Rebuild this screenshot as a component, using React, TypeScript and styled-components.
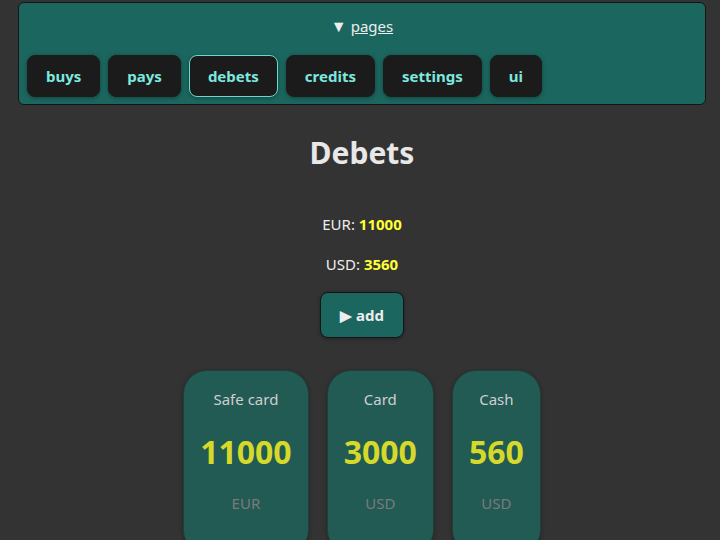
import React from "react";
import styled, { createGlobalStyle } from "styled-components";

const Global = createGlobalStyle`
  html, body { margin: 0; padding: 0; background: #333333; }
  body { font-family: "Noto Sans", "Open Sans", sans-serif; color: #e6e6e6; }
  * { box-sizing: border-box; }
`;

const Page = styled.div`
  padding: 2px 14px 0 18px;
  display: flex;
  flex-direction: column;
  align-items: center;
`;

const Nav = styled.details`
  width: 100%;
  background: #1b675f;
  border: 1px solid #151515;
  border-radius: 6px;
  padding: 12px 8px 7px;
`;

const Summary = styled.summary`
  list-style: none;
  text-align: center;
  font-size: 15px;
  color: #ededed;
  cursor: pointer;
  line-height: 22px;
  &::-webkit-details-marker { display: none; }
`;

const Arrow = styled.span`
  font-size: 16px;
  margin-right: 4px;
`;

const SummaryLabel = styled.span`
  text-decoration: underline;
`;

const Tabs = styled.div`
  display: flex;
  gap: 8px;
  margin-top: 18px;
`;

const Tab = styled.button<{ $active?: boolean }>`
  height: 42px;
  padding: 0 18px;
  background: #1b1b1b;
  border: 1px solid ${(p) => (p.$active ? "#6fd6cd" : "#1b1b1b")};
  border-radius: 8px;
  color: #7ce8df;
  font-family: inherit;
  font-size: 15px;
  font-weight: 700;
  box-shadow: 0 1px 4px rgba(0, 0, 0, 0.35);
`;

const Title = styled.h1`
  margin: 28px 0 0;
  font-size: 30px;
  line-height: 40px;
  font-weight: 700;
  color: #e8e8e8;
`;

const Line = styled.p<{ $first?: boolean }>`
  margin: ${(p) => (p.$first ? "40px" : "18px")} 0 0;
  font-size: 15px;
  line-height: 22px;
  color: #eeeeee;
`;

const Amount = styled.b`
  color: #ffff33;
`;

const AddButton = styled.button`
  margin-top: 17px;
  width: 84px;
  height: 46px;
  background: #1b675f;
  border: 1px solid #141414;
  border-radius: 8px;
  color: #ededed;
  font-family: inherit;
  font-size: 15px;
  font-weight: 700;
  box-shadow: 0 1px 4px rgba(0, 0, 0, 0.3);
`;

const Cards = styled.div`
  display: flex;
  gap: 18px;
  margin-top: 32px;
`;

const Card = styled.div`
  background: #225b54;
  border: 1px solid #1f3f3b;
  border-radius: 24px;
  padding: 18px 16px 40px;
  display: flex;
  flex-direction: column;
  align-items: center;
  box-shadow: 0 1px 4px rgba(0, 0, 0, 0.3);
`;

const CardTitle = styled.div`
  font-size: 15px;
  line-height: 20px;
  color: #cfcfcf;
`;

const CardValue = styled.div`
  margin-top: 31px;
  font-size: 32px;
  line-height: 24px;
  font-weight: 700;
  color: #d6d92a;
`;

const CardCurrency = styled.div`
  margin-top: 29px;
  font-size: 15px;
  line-height: 20px;
  color: #7a7a7a;
`;

const tabs = ["buys", "pays", "debets", "credits", "settings", "ui"];
const cards = [
  { title: "Safe card", value: "11000", cur: "EUR" },
  { title: "Card", value: "3000", cur: "USD" },
  { title: "Cash", value: "560", cur: "USD" },
];

export default function App() {
  return (
    <>
      <Global />
      <Page>
        <Nav open>
          <Summary>
            <Arrow>▼</Arrow>
            <SummaryLabel>pages</SummaryLabel>
          </Summary>
          <Tabs>
            {tabs.map((t) => (
              <Tab key={t} $active={t === "debets"}>
                {t}
              </Tab>
            ))}
          </Tabs>
        </Nav>
        <Title>Debets</Title>
        <Line $first>
          EUR: <Amount>11000</Amount>
        </Line>
        <Line>
          USD: <Amount>3560</Amount>
        </Line>
        <AddButton>▶ add</AddButton>
        <Cards>
          {cards.map((c) => (
            <Card key={c.title}>
              <CardTitle>{c.title}</CardTitle>
              <CardValue>{c.value}</CardValue>
              <CardCurrency>{c.cur}</CardCurrency>
            </Card>
          ))}
        </Cards>
      </Page>
    </>
  );
}
